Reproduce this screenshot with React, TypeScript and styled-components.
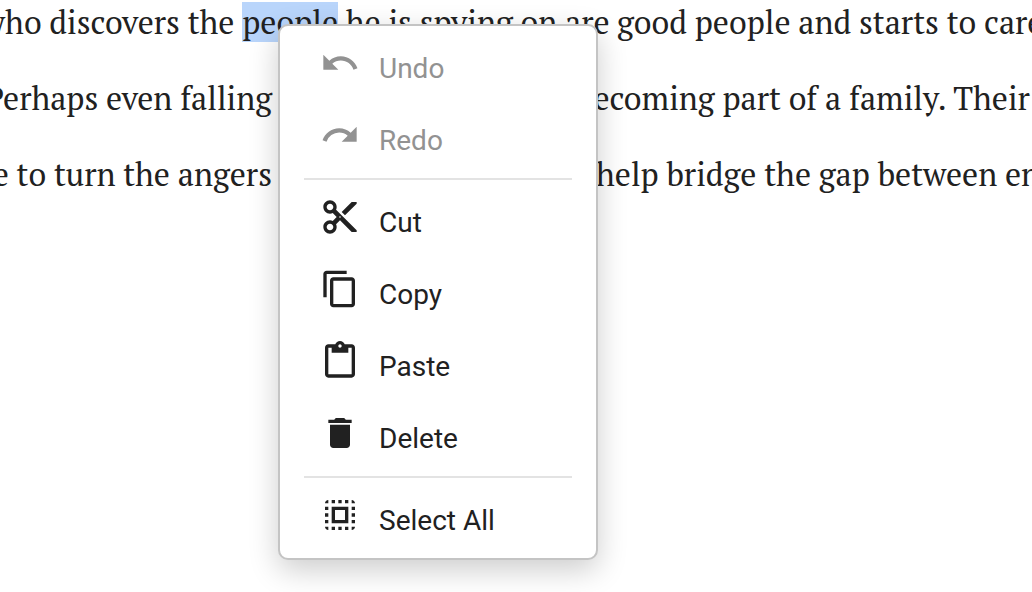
import React from "react";
import styled, { createGlobalStyle } from "styled-components";
import type { IconType } from "react-icons";
import {
  MdContentCopy,
  MdContentCut,
  MdContentPaste,
  MdDelete,
  MdRedo,
  MdSelectAll,
  MdUndo,
} from "react-icons/md";

const GlobalStyle = createGlobalStyle`
  *, *::before, *::after { box-sizing: border-box; }
  body { margin: 0; background: #fff; color: #212121; }
`;

const Page = styled.main`
  position: relative;
  min-height: 100vh;
  overflow: hidden;
`;

const Prose = styled.p`
  margin: -16px 0 0;
  font-family: "PT Serif", "Liberation Serif", serif;
  font-size: 32px;
  line-height: 76px;
  white-space: pre;
`;

const Line = styled.span<{ $lead: number; $middle: number }>`
  display: grid;
  grid-template-columns: ${(p) => p.$lead}px ${(p) => p.$middle}px minmax(0, 1fr);
`;

const Lead = styled.span`
  display: flex;
  justify-content: flex-end;
`;

const Selection = styled.mark`
  align-self: center;
  line-height: 40px;
  background: #b9d5fb;
  color: inherit;
`;

const Menu = styled.div`
  position: absolute;
  top: 24px;
  left: 278px;
  width: 320px;
  padding-top: 8px;
  border: 2px solid #c4c4c4;
  border-radius: 10px;
  background: #fff;
  box-shadow: 0 10px 30px rgba(0, 0, 0, 0.2);
`;

const MenuItem = styled.button`
  display: flex;
  align-items: center;
  gap: 19px;
  width: 100%;
  height: 72px;
  padding: 0 40px 2px;
  border: 0;
  background: transparent;
  color: #212121;
  font-family: Roboto, "Liberation Sans", sans-serif;
  font-size: 28px;
  line-height: 32px;
  text-align: left;

  &:disabled {
    color: #929292;
  }

  svg {
    flex: none;
    width: 40px;
    height: 40px;
    margin-bottom: 12px;
  }
`;

const Divider = styled.hr`
  height: 2px;
  margin: 0 24px 8px;
  border: 0;
  background: #e3e3e3;
`;

type Command = { label: string; icon: IconType; disabled?: boolean };

const groups: Command[][] = [
  [
    { label: "Undo", icon: MdUndo, disabled: true },
    { label: "Redo", icon: MdRedo, disabled: true },
  ],
  [
    { label: "Cut", icon: MdContentCut },
    { label: "Copy", icon: MdContentCopy },
    { label: "Paste", icon: MdContentPaste },
    { label: "Delete", icon: MdDelete },
  ],
  [{ label: "Select All", icon: MdSelectAll }],
];

export default function App() {
  return (
    <>
      <GlobalStyle />
      <Page>
        <Prose>
          <Line $lead={338} $middle={279}>
            <Lead>
              {"who discovers the "}
              <Selection>people</Selection>
            </Lead>
            <span>{" he is spying on are"}</span>
            <span>good people and starts to care</span>
          </Line>
          <Line $lead={272} $middle={304}>
            <Lead>Perhaps even falling</Lead>
            <span />
            <span>becoming part of a family. Their</span>
          </Line>
          <Line $lead={272} $middle={324}>
            <Lead>be to turn the angers</Lead>
            <span />
            <span>help bridge the gap between en</span>
          </Line>
        </Prose>
        <Menu role="menu" aria-label="Edit">
          {groups.map((group, index) => (
            <React.Fragment key={group[0].label}>
              {index > 0 && <Divider />}
              {group.map(({ label, icon: Icon, disabled }) => (
                <MenuItem key={label} type="button" role="menuitem" disabled={disabled}>
                  <Icon aria-hidden />
                  {label}
                </MenuItem>
              ))}
            </React.Fragment>
          ))}
        </Menu>
      </Page>
    </>
  );
}
